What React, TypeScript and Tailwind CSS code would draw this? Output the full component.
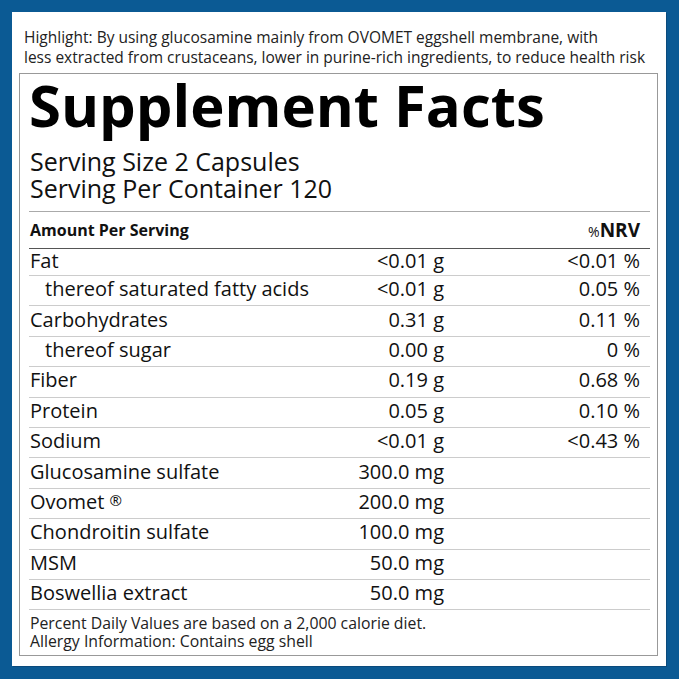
import React from "react";

const rows = [
  { name: "Fat", amount: "<0.01 g", nrv: "<0.01 %" },
  { name: "thereof saturated fatty acids", amount: "<0.01 g", nrv: "0.05 %", indent: true },
  { name: "Carbohydrates", amount: "0.31 g", nrv: "0.11 %" },
  { name: "thereof sugar", amount: "0.00 g", nrv: "0 %", indent: true },
  { name: "Fiber", amount: "0.19 g", nrv: "0.68 %" },
  { name: "Protein", amount: "0.05 g", nrv: "0.10 %" },
  { name: "Sodium", amount: "<0.01 g", nrv: "<0.43 %" },
  { name: "Glucosamine sulfate", amount: "300.0 mg", nrv: "" },
  { name: "Ovomet", amount: "200.0 mg", nrv: "", reg: true },
  { name: "Chondroitin sulfate", amount: "100.0 mg", nrv: "" },
  { name: "MSM", amount: "50.0 mg", nrv: "" },
  { name: "Boswellia extract", amount: "50.0 mg", nrv: "" },
];

const App = () => {
  return (
    <div
      className="w-[679px] h-[679px] bg-[#0b5a94] pt-[12px] pl-[12px] pr-[13px] pb-[13px] text-[#111]"
      style={{ fontFamily: '"Open Sans", "Noto Sans", sans-serif' }}
    >
      <div className="w-full h-full bg-white flex flex-col shadow-[1px_1px_0_#0a4a7c]">
        {/* highlight */}
        <div className="px-[12px] pt-[15px] text-[15.5px] leading-[20px] text-[#222] whitespace-nowrap">
          Highlight: By using glucosamine mainly from OVOMET eggshell membrane, with
          <br />
          less extracted from crustaceans, lower in purine-rich ingredients, to reduce health risk
        </div>

        {/* facts box */}
        <div className="mt-[6px] ml-[7px] mr-[8px] border border-[#999] pl-[9px] pr-[7px] pt-[2px] pb-[5px]">
          <h1 className="text-[58px] leading-[58px] font-bold text-black whitespace-nowrap">
            Supplement Facts
          </h1>
          <div className="mt-[14px] pl-[1px] text-[25px] leading-[27px] pb-[9px] border-b border-[#aaa]">
            <div>Serving Size 2 Capsules</div>
            <div>Serving Per Container 120</div>
          </div>

          <div className="flex items-center h-[37px] border-b border-[#555] pl-[1px] pr-[10px]">
            <div className="flex-1 text-[16px] font-bold">Amount Per Serving</div>
            <div className="w-[200px] text-right">
              <span className="text-[14px]">%</span>
              <span className="text-[19px] font-bold">NRV</span>
            </div>
          </div>

          {rows.map((r, i) => (
            <div
              key={r.name}
              className={
                "flex items-center border-b border-[#ccc] pl-[1px] pr-[10px] pb-[3px] text-[20px] leading-[24px] whitespace-nowrap " +
                (i === 0 ? "h-[27px]" : "h-[30.4px]")
              }
            >
              <div className={"flex-1 " + (r.indent ? "pl-[15px]" : "")}>
                {r.name}
                {r.reg && (
                  <sup className="text-[15px] ml-[5px] relative top-[-3px]">®</sup>
                )}
              </div>
              <div className="w-[100px] text-right">{r.amount}</div>
              <div className="w-[196px] text-right">{r.nrv}</div>
            </div>
          ))}

          <div className="pt-[4px] pl-[1px] text-[15.8px] leading-[18px] text-[#222]">
            <div>Percent Daily Values are based on a 2,000 calorie diet.</div>
            <div>Allergy Information: Contains egg shell</div>
          </div>
        </div>
      </div>
    </div>
  );
};

export default App;
